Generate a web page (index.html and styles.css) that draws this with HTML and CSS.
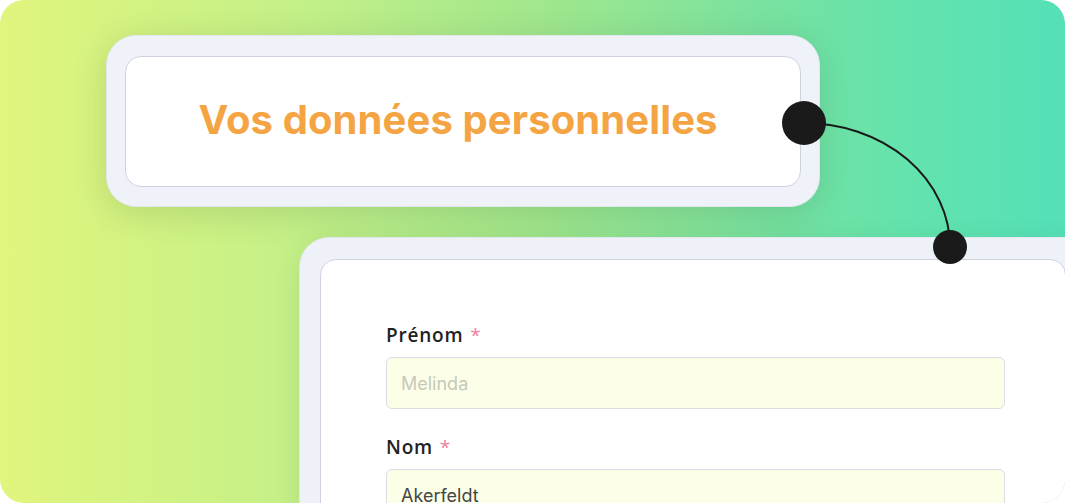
FILE: index.html
```html
<!DOCTYPE html>
<html lang="fr">
<head>
	<meta charset="UTF-8">
	<title>Vos données personnelles</title>
	<link rel="stylesheet" href="styles.css">
</head>
<body>
	<div class="stage">
		<div class="title-card">
			<div class="title-inner">
				<h1>Vos données personnelles</h1>
			</div>
		</div>

		<svg class="link" width="1065" height="503" viewBox="0 0 1065 503">
			<path d="M804 123 A146 124 0 0 1 950 247" fill="none" stroke="#1a1a1a" stroke-width="2"/>
		</svg>

		<div class="form-card">
			<div class="form-inner">
				<div class="field">
					<label>Prénom <span class="req">*</span></label>
					<div class="input placeholder">Melinda</div>
				</div>
				<div class="field">
					<label>Nom <span class="req">*</span></label>
					<div class="input">Akerfeldt</div>
				</div>
			</div>
		</div>

		<span class="dot dot-big"></span>
		<span class="dot dot-small"></span>
	</div>
</body>
</html>
```

FILE: styles.css
```css
*{padding: 0; margin: 0; box-sizing: border-box;}
body{background: #fff; width: 1065px; height: 503px; overflow: hidden;}

.stage{
	position: relative; width: 1065px; height: 503px; overflow: hidden; border-radius: 24px;
	background: linear-gradient(90deg, #e0f57d 0%, #c4f088 28%, #a2e78c 50%, #78e2a0 72%, #63e3ad 85%, #55e0b8 100%);
}

/* title node */
.title-card{
	position: absolute; left: 106px; top: 35px; width: 714px; height: 172px;
	padding: 20px 18px 19px 18px;
	background: #eff2f8; border: 1px solid #e2e6ee; border-radius: 30px;
	box-shadow: 0 6px 34px rgba(40,70,30,.16);
}
.title-inner{
	height: 100%; display: flex; align-items: center; justify-content: center;
	padding-right: 10px;
	background: #fff; border: 1px solid #cdd3e0; border-radius: 16px;
}
.title-inner h1{
	font-family: Inter, "Liberation Sans", sans-serif; font-weight: 700; font-size: 40px;
	color: #f5a443; letter-spacing: 0.1px; margin-top: -4px;
}

.link{position: absolute; left: 0; top: 0;}

/* form node */
.form-card{
	position: absolute; left: 299px; top: 237px; width: 800px; height: 320px;
	padding: 21px 0 0 20px;
	background: #eef1f7; border: 1px solid #e2e6ee; border-radius: 30px;
	box-shadow: 0 4px 26px rgba(40,70,30,.10);
}
.form-inner{
	width: 746px; height: 100%; padding: 63px 58px 0 65px;
	background: #fff; border: 1px solid #cdd3e0; border-radius: 16px;
	display: flex; flex-direction: column; gap: 26px;
}
.field{display: flex; flex-direction: column; gap: 10px; width: 619px;}
.field label{
	font-family: "Open Sans", "Liberation Sans", sans-serif; font-weight: 600; font-size: 19px;
	color: #222; line-height: 24px; letter-spacing: 0.8px;
}
.req{color: #f47ca0; font-weight: 400; margin-left: 1px;}
.input{
	height: 52px; padding: 0 14px; display: flex; align-items: center;
	background: #fcfee8; border: 1px solid #dadee4; border-radius: 6px;
	font-family: Inter, "Liberation Sans", sans-serif; font-size: 18px; color: #444;
}
.input.placeholder{color: #c6c9bb;}

.dot{position: absolute; border-radius: 50%; background: #1a1a1a;}
.dot-big{left: 782px; top: 101px; width: 44px; height: 44px;}
.dot-small{left: 933px; top: 230px; width: 34px; height: 34px;}
```
